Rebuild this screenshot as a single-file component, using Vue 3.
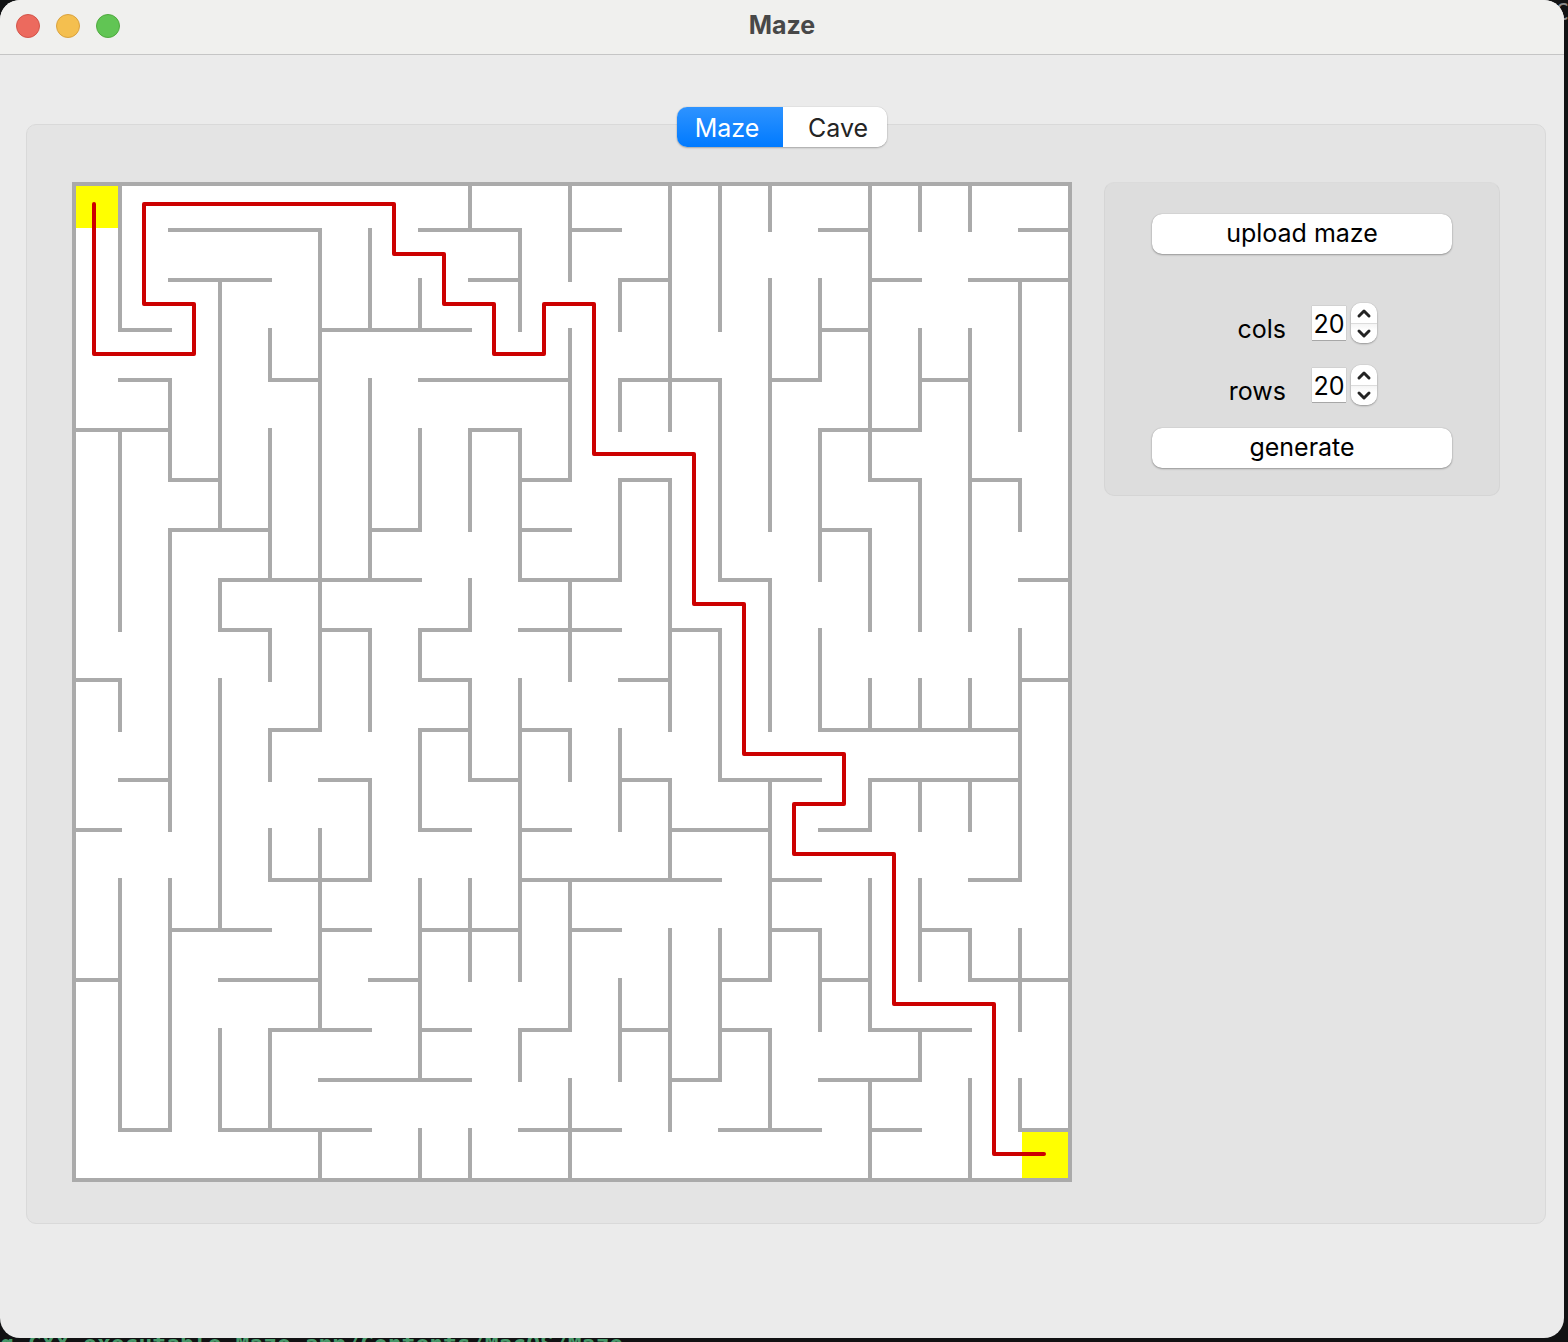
<script setup>
import { ref } from 'vue'

const cols = ref(20)
const rows = ref(20)
const tab = ref('Maze')

const CELL = 50

// Vertical walls: column line -> [from row line, to row line]
const vertical = {
  1: [[0, 3], [5, 9], [10, 11], [14, 19]],
  2: [[4, 6], [7, 13], [14, 19]],
  3: [[2, 7], [8, 9], [10, 15], [17, 19]],
  4: [[3, 4], [5, 8], [9, 10], [11, 12], [13, 14], [17, 19]],
  5: [[1, 11], [13, 17], [19, 20]],
  6: [[1, 3], [4, 8], [9, 11], [12, 14]],
  7: [[2, 3], [5, 7], [9, 10], [11, 13], [14, 18], [19, 20]],
  8: [[0, 1], [5, 7], [8, 9], [10, 12], [14, 16], [19, 20]],
  9: [[1, 3], [5, 8], [10, 16], [17, 18]],
  10: [[0, 2], [3, 6], [8, 10], [11, 12], [14, 17], [18, 20]],
  11: [[2, 3], [4, 5], [6, 8], [11, 13], [16, 18]],
  12: [[0, 5], [6, 11], [12, 14], [15, 19]],
  13: [[0, 3], [4, 8], [9, 12], [15, 18]],
  14: [[0, 1], [2, 7], [8, 11], [12, 16], [17, 19]],
  15: [[2, 4], [5, 8], [9, 11], [15, 17]],
  16: [[0, 6], [7, 9], [10, 11], [12, 13], [14, 17], [18, 20]],
  17: [[0, 1], [3, 5], [6, 9], [10, 11], [12, 13], [14, 16], [17, 18]],
  18: [[0, 1], [3, 9], [10, 11], [12, 13], [15, 16], [18, 20]],
  19: [[2, 5], [6, 7], [9, 14], [15, 17], [18, 19]],
}

// Horizontal walls: row line -> [from column line, to column line]
const horizontal = {
  1: [[2, 5], [7, 9], [10, 11], [15, 16], [19, 20]],
  2: [[2, 4], [8, 9], [11, 12], [16, 17], [18, 20]],
  3: [[1, 2], [5, 8], [15, 16]],
  4: [[1, 2], [4, 5], [7, 10], [11, 13], [14, 15], [17, 18]],
  5: [[0, 2], [8, 9], [15, 17]],
  6: [[2, 3], [9, 10], [11, 12], [16, 17], [18, 19]],
  7: [[2, 4], [6, 7], [9, 10], [15, 16]],
  8: [[3, 7], [9, 11], [13, 14], [19, 20]],
  9: [[3, 4], [5, 6], [7, 8], [9, 11], [12, 13]],
  10: [[0, 1], [7, 8], [11, 12], [19, 20]],
  11: [[4, 5], [7, 8], [9, 10], [15, 19]],
  12: [[1, 2], [5, 6], [8, 9], [11, 12], [13, 15], [16, 19]],
  13: [[0, 1], [7, 8], [9, 10], [12, 14], [15, 16]],
  14: [[4, 6], [9, 13], [14, 15], [18, 19]],
  15: [[2, 4], [5, 6], [7, 9], [10, 11], [14, 15], [17, 18]],
  16: [[0, 1], [3, 5], [6, 7], [13, 14], [15, 16], [18, 20]],
  17: [[4, 6], [7, 8], [9, 10], [11, 12], [13, 14], [16, 18]],
  18: [[5, 8], [12, 13], [15, 17]],
  19: [[1, 2], [3, 6], [9, 11], [13, 15], [16, 17], [19, 20]],
}

// Turning points of the solution as [column, row]
const solution = [
  [0, 0], [0, 3], [2, 3], [2, 2], [1, 2], [1, 0], [6, 0], [6, 1], [7, 1], [7, 2],
  [8, 2], [8, 3], [9, 3], [9, 2], [10, 2], [10, 5], [12, 5], [12, 8], [13, 8],
  [13, 11], [15, 11], [15, 12], [14, 12], [14, 13], [16, 13], [16, 16], [18, 16],
  [18, 19], [19, 19],
]

const at = (n) => Math.max(4, n * CELL)

const walls = [
  ...Object.entries(vertical).flatMap(([x, runs]) =>
    runs.map(([a, b]) => `M${x * CELL} ${at(a)}V${at(b)}`)),
  ...Object.entries(horizontal).flatMap(([y, runs]) =>
    runs.map(([a, b]) => `M${at(a)} ${y * CELL}H${at(b)}`)),
].join('')

const route = solution.map(([c, r]) => `${c * CELL + 24},${r * CELL + 24}`).join(' ')
</script>

<template>
  <div class="desktop">
    <div class="terminal">g CXX executable Maze.app/Contents/MacOS/Maze</div>
    <div class="terminal-edge">C</div>
    <div class="window">
      <header class="titlebar">
        <div class="lights">
          <button class="light close" aria-label="Close"></button>
          <button class="light minimise" aria-label="Minimise"></button>
          <button class="light zoom" aria-label="Zoom"></button>
        </div>
        <h1 class="title">Maze</h1>
      </header>

      <main class="content">
        <nav class="tabs">
          <button
            v-for="name in ['Maze', 'Cave']"
            :key="name"
            class="tab"
            :class="{ active: tab === name }"
            @click="tab = name"
          >{{ name }}</button>
        </nav>

        <section class="panel">
          <svg class="maze" viewBox="2 2 1000 1000" role="img" aria-label="Solved maze">
            <rect x="2" y="2" width="1000" height="1000" fill="#fff" />
            <rect x="6" y="6" width="42" height="42" fill="#ff0" />
            <rect x="952" y="952" width="46" height="46" fill="#ff0" />
            <path :d="walls" fill="none" stroke="#aaa" stroke-width="4" stroke-linecap="square" />
            <rect x="4" y="4" width="996" height="996" fill="none" stroke="#aaa" stroke-width="4" />
            <polyline
              :points="route"
              fill="none"
              stroke="#c00"
              stroke-width="4"
              stroke-linecap="round"
              stroke-linejoin="round"
            />
          </svg>

          <form class="controls" @submit.prevent>
            <button type="button" class="push">upload maze</button>
            <div class="fields">
              <div class="field">
                <label for="cols">cols</label>
                <input id="cols" v-model="cols" type="text" inputmode="numeric" />
                <div class="stepper">
                  <button type="button" aria-label="More cols" @click="cols++">
                    <svg viewBox="0 0 26 20"><path d="M8 13L13 8L18 13" /></svg>
                  </button>
                  <button type="button" aria-label="Fewer cols" @click="cols--">
                    <svg viewBox="0 0 26 20"><path d="M8 7L13 12L18 7" /></svg>
                  </button>
                </div>
              </div>
              <div class="field">
                <label for="rows">rows</label>
                <input id="rows" v-model="rows" type="text" inputmode="numeric" />
                <div class="stepper">
                  <button type="button" aria-label="More rows" @click="rows++">
                    <svg viewBox="0 0 26 20"><path d="M8 13L13 8L18 13" /></svg>
                  </button>
                  <button type="button" aria-label="Fewer rows" @click="rows--">
                    <svg viewBox="0 0 26 20"><path d="M8 7L13 12L18 7" /></svg>
                  </button>
                </div>
              </div>
            </div>
            <button type="button" class="push">generate</button>
          </form>
        </section>
      </main>
    </div>
  </div>
</template>

<style>
body {
  margin: 0;
  background: #111213;
}
</style>

<style scoped>
.desktop {
  position: relative;
  min-height: 100vh;
  box-sizing: border-box;
  padding: 0 4px 4px 0;
  overflow: hidden;
  background: #111213;
  font-family: Inter, "Liberation Sans", sans-serif;
  font-size: 25px;
  line-height: 32px;
}

button,
input {
  box-sizing: border-box;
  margin: 0;
  padding: 0;
  border: 0;
  font: inherit;
  color: inherit;
}

.terminal {
  position: absolute;
  left: 0;
  bottom: -16px;
  font: bold 23px/28px "DejaVu Sans Mono", monospace;
  color: #48986a;
  white-space: pre;
}

.terminal-edge {
  position: absolute;
  top: -2px;
  right: -1px;
  font: 23px/28px "DejaVu Sans Mono", monospace;
  color: #8b8b8b;
}

.window {
  position: relative;
  display: flex;
  flex-direction: column;
  min-height: calc(100vh - 4px);
  border-radius: 20px;
  overflow: hidden;
  background: #ebebeb;
  color: #000;
}

.titlebar {
  display: grid;
  grid-template-columns: 1fr auto 1fr;
  align-items: center;
  box-sizing: border-box;
  height: 55px;
  padding: 0 16px 2px;
  border-bottom: 1px solid #c5c5c5;
  background: #f0f0ee;
}

.lights {
  display: flex;
  gap: 16px;
}

.light {
  width: 24px;
  height: 24px;
  border: 1px solid;
  border-radius: 50%;
}

.close {
  background: #ec6a5e;
  border-color: #d2554a;
}

.minimise {
  background: #f4bf4f;
  border-color: #d9a23f;
}

.zoom {
  background: #61c554;
  border-color: #50a93f;
}

.title {
  margin: 0;
  padding-bottom: 2px;
  font-size: 25px;
  font-weight: 700;
  color: #484848;
}

.content {
  padding-top: 52px;
}

.tabs {
  position: relative;
  z-index: 1;
  display: grid;
  grid-template-columns: 106px 104px;
  width: 210px;
  height: 40px;
  margin: 0 auto -23px;
  border-radius: 10px;
  overflow: hidden;
  background: #fff;
  box-shadow: 0 0 1px rgba(0, 0, 0, 0.3), 0 1px 2px rgba(0, 0, 0, 0.25);
}

.tab {
  padding: 2px 0 0 6px;
  background: #fff;
  color: #242424;
}

.tab.active {
  padding: 2px 6px 0 0;
  background: linear-gradient(#2e93ff, #007aff);
  color: #fff;
}

.panel {
  display: flex;
  align-items: flex-start;
  gap: 32px;
  box-sizing: border-box;
  margin: 0 18px 0 26px;
  padding: 57px 45px 41px;
  border: 1px solid #d9d9d9;
  border-radius: 10px;
  background: #e4e4e4;
}

.maze {
  display: block;
  flex: 1;
  min-width: 0;
}

.controls {
  flex: none;
  display: flex;
  flex-direction: column;
  box-sizing: border-box;
  width: 396px;
  padding: 31px 47px 27px;
  border: 1px solid #d5d5d5;
  border-top-color: #dbdbdb;
  border-radius: 10px;
  background: #ddd;
}

.push {
  height: 40px;
  padding-bottom: 2px;
  border-radius: 10px;
  background: #fff;
  box-shadow: 0 0 1px rgba(0, 0, 0, 0.3), 0 1px 2px rgba(0, 0, 0, 0.3);
}

.fields {
  display: flex;
  flex-direction: column;
  gap: 22px;
  margin: 49px 0 23px;
}

.field {
  display: flex;
  align-items: center;
  height: 40px;
}

.field label {
  width: 134px;
  margin-right: 26px;
  padding-top: 12px;
  text-align: right;
}

.field input {
  width: 34px;
  height: 34px;
  margin-right: 5px;
  padding-top: 2px;
  background: #fff;
  text-align: center;
  box-shadow: 0 0 1px rgba(0, 0, 0, 0.3), 0 1px 0 #b0b0b0;
}

.stepper {
  display: flex;
  flex-direction: column;
  width: 26px;
  height: 40px;
  border-radius: 10px;
  overflow: hidden;
  background: #fff;
  box-shadow: 0 0 1px rgba(0, 0, 0, 0.3), 0 1px 2px rgba(0, 0, 0, 0.3);
}

.stepper button {
  height: 20px;
  background: #fff;
}

.stepper button + button {
  border-top: 1px solid #dcdcdc;
  background: linear-gradient(#f4f4f4, #fff 6px);
}

.stepper svg {
  display: block;
  width: 26px;
  height: 20px;
  fill: none;
  stroke: #242424;
  stroke-width: 3;
  stroke-linecap: round;
  stroke-linejoin: round;
}
</style>
